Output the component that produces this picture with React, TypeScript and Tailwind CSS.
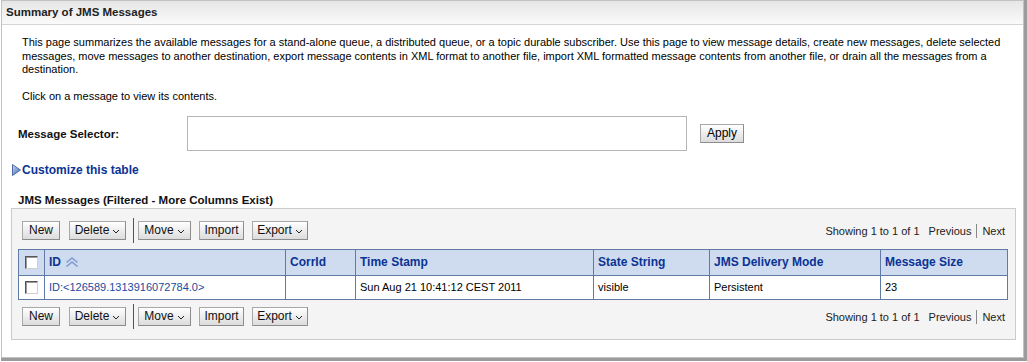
import React from "react";

const Chevron = () => (
  <svg width="8" height="5" viewBox="0 0 8 5" className="ml-[3px] mt-[2px]">
    <path d="M1 1 L4 4 L7 1" fill="none" stroke="#222" strokeWidth="1" />
  </svg>
);

const Btn = ({ label, dd, w }: { label: string; dd?: boolean; w: string }) => (
  <div
    className={`${w} h-[19px] flex items-center justify-center border border-[#a8a8a8] border-b-[#8c8c8c] border-r-[#8c8c8c] bg-linear-to-b from-[#ffffff] to-[#dcdcdc] text-[12px] text-[#111] leading-none`}
  >
    <span>{label}</span>
    {dd && <Chevron />}
  </div>
);

const Toolbar = () => (
  <div className="flex items-center h-[25px] pl-[10px] pr-[10px]">
    <div className="flex items-center">
      <Btn label="New" w="w-[38px]" />
      <div className="w-[9px]" />
      <Btn label="Delete" dd w="w-[57px]" />
      <div className="w-[7px]" />
      <div className="w-[1px] h-[25px] bg-[#555]" />
      <div className="w-[4px]" />
      <Btn label="Move" dd w="w-[53px]" />
      <div className="w-[8px]" />
      <Btn label="Import" w="w-[45px]" />
      <div className="w-[8px]" />
      <Btn label="Export" dd w="w-[56px]" />
    </div>
    <div className="ml-auto flex items-center text-[11px] text-[#222] mt-[2px]">
      <span>Showing 1 to 1 of 1</span>
      <span className="ml-[9px]">Previous</span>
      <span className="mx-[5px] w-[1px] h-[14px] bg-[#888]" />
      <span>Next</span>
    </div>
  </div>
);

const CheckBox = () => (
  <div className="w-[13px] h-[13px] bg-white border border-t-[#555] border-l-[#555] border-b-[#d0d0d0] border-r-[#d0d0d0] shadow-[inset_1px_1px_0_#9a9a9a]" />
);

const SortIcon = () => (
  <svg width="14" height="10" viewBox="0 0 14 10" className="ml-[4px]">
    <path d="M1.5 5.5 L7 1 L12.5 5.5" fill="none" stroke="#7f9ccf" strokeWidth="1.6" />
    <path d="M1.5 9.5 L7 5 L12.5 9.5" fill="none" stroke="#7f9ccf" strokeWidth="1.6" />
  </svg>
);

const cols = [
  { w: "w-[26px]" },
  { w: "w-[241px]", h: "ID" },
  { w: "w-[70px]", h: "CorrId" },
  { w: "w-[238px]", h: "Time Stamp" },
  { w: "w-[116px]", h: "State String" },
  { w: "w-[171px]", h: "JMS Delivery Mode" },
  { w: "w-[127px]", h: "Message Size" },
];

export default function App() {
  return (
    <div className="w-[1027px] h-[362px] bg-white font-['Liberation_Sans',Arial,sans-serif] text-[11px] text-black">
      <div className="ml-[1px] w-[1026px] h-[361px] border-r-[3px] border-b-[3px] border-[#9b9b9b]">
        <div className="w-full h-full border border-[#c2c2c2] flex flex-col">
          {/* header */}
          <div className="h-[24px] border-b border-[#d4d4d4] bg-linear-to-b from-[#e6e6e6] to-[#fafafa] flex items-center pl-[4px]">
            <span className="font-bold text-[11.5px] text-[#222]">Summary of JMS Messages</span>
          </div>

          {/* description */}
          <div className="ml-[20px] mt-[11px] leading-[13.5px] whitespace-nowrap">
            <div>
              This page summarizes the available messages for a stand-alone queue, a distributed queue, or a topic durable subscriber. Use this page to view message details, create new messages, delete selected
            </div>
            <div>
              messages, move messages to another destination, export message contents in XML format to another file, import XML formatted message contents from another file, or drain all the messages from a
            </div>
            <div>destination.</div>
            <div className="mt-[13.5px]">Click on a message to view its contents.</div>
          </div>

          {/* message selector */}
          <div className="flex items-center mt-[12px] ml-[16px]">
            <div className="w-[169px] font-bold text-[11.5px] text-[#111] mt-[3px]">Message Selector:</div>
            <div className="w-[500px] h-[35px] border border-[#b5b5b5] bg-white" />
            <div className="ml-[13px] w-[44px] h-[19px] flex items-center justify-center border border-[#a8a8a8] border-b-[#8c8c8c] border-r-[#8c8c8c] bg-linear-to-b from-[#ffffff] to-[#dcdcdc] text-[12px] leading-none">
              Apply
            </div>
          </div>

          {/* customize */}
          <div className="flex items-center mt-[12px] ml-[10px] h-[14px]">
            <svg width="9" height="12" viewBox="0 0 9 12">
              <defs>
                <linearGradient id="tri" x1="0" y1="0" x2="1" y2="1">
                  <stop offset="0" stopColor="#c9d8f0" />
                  <stop offset="1" stopColor="#3e63a8" />
                </linearGradient>
              </defs>
              <polygon points="0.5,0.5 8.5,6 0.5,11.5" fill="url(#tri)" stroke="#4a6aa8" strokeWidth="1" />
            </svg>
            <span className="ml-[1px] font-bold text-[12px] text-[#0b3394]">Customize this table</span>
          </div>

          {/* table heading */}
          <div className="ml-[16px] mt-[16px] font-bold text-[11.5px] text-[#111] leading-[14px]">
            JMS Messages (Filtered - More Columns Exist)
          </div>

          {/* table container */}
          <div className="ml-[9px] mt-[1px] w-[1005px] border border-[#cbcbcb] bg-[#f4f4f4] pt-[9px] pb-[10px]">
            <Toolbar />
            <table className="ml-[6px] mt-[6px] border-collapse table-fixed w-[989px] border border-[#5f7aa5]">
              <thead>
                <tr className="h-[26px] bg-[#cfdcef]">
                  {cols.map((c, i) => (
                    <th
                      key={i}
                      className={`${c.w} border border-[#5f7aa5] text-left align-middle p-0 px-[4px] font-bold text-[12px] text-[#0b3394]`}
                    >
                      {i === 0 ? (
                        <div className="flex justify-center">
                          <CheckBox />
                        </div>
                      ) : i === 1 ? (
                        <div className="flex items-center">
                          <span>ID</span>
                          <SortIcon />
                        </div>
                      ) : (
                        c.h
                      )}
                    </th>
                  ))}
                </tr>
              </thead>
              <tbody>
                <tr className="h-[24px] bg-white">
                  <td className="border border-[#5f7aa5] p-0">
                    <div className="flex justify-center">
                      <CheckBox />
                    </div>
                  </td>
                  <td className="border border-[#5f7aa5] px-[4px] text-[#1a4a9e]">ID:&lt;126589.1313916072784.0&gt;</td>
                  <td className="border border-[#5f7aa5] px-[4px]"></td>
                  <td className="border border-[#5f7aa5] px-[4px]">Sun Aug 21 10:41:12 CEST 2011</td>
                  <td className="border border-[#5f7aa5] px-[4px]">visible</td>
                  <td className="border border-[#5f7aa5] px-[4px]">Persistent</td>
                  <td className="border border-[#5f7aa5] px-[4px]">23</td>
                </tr>
              </tbody>
            </table>
            <div className="mt-[4px]">
              <Toolbar />
            </div>
          </div>
        </div>
      </div>
    </div>
  );
}
